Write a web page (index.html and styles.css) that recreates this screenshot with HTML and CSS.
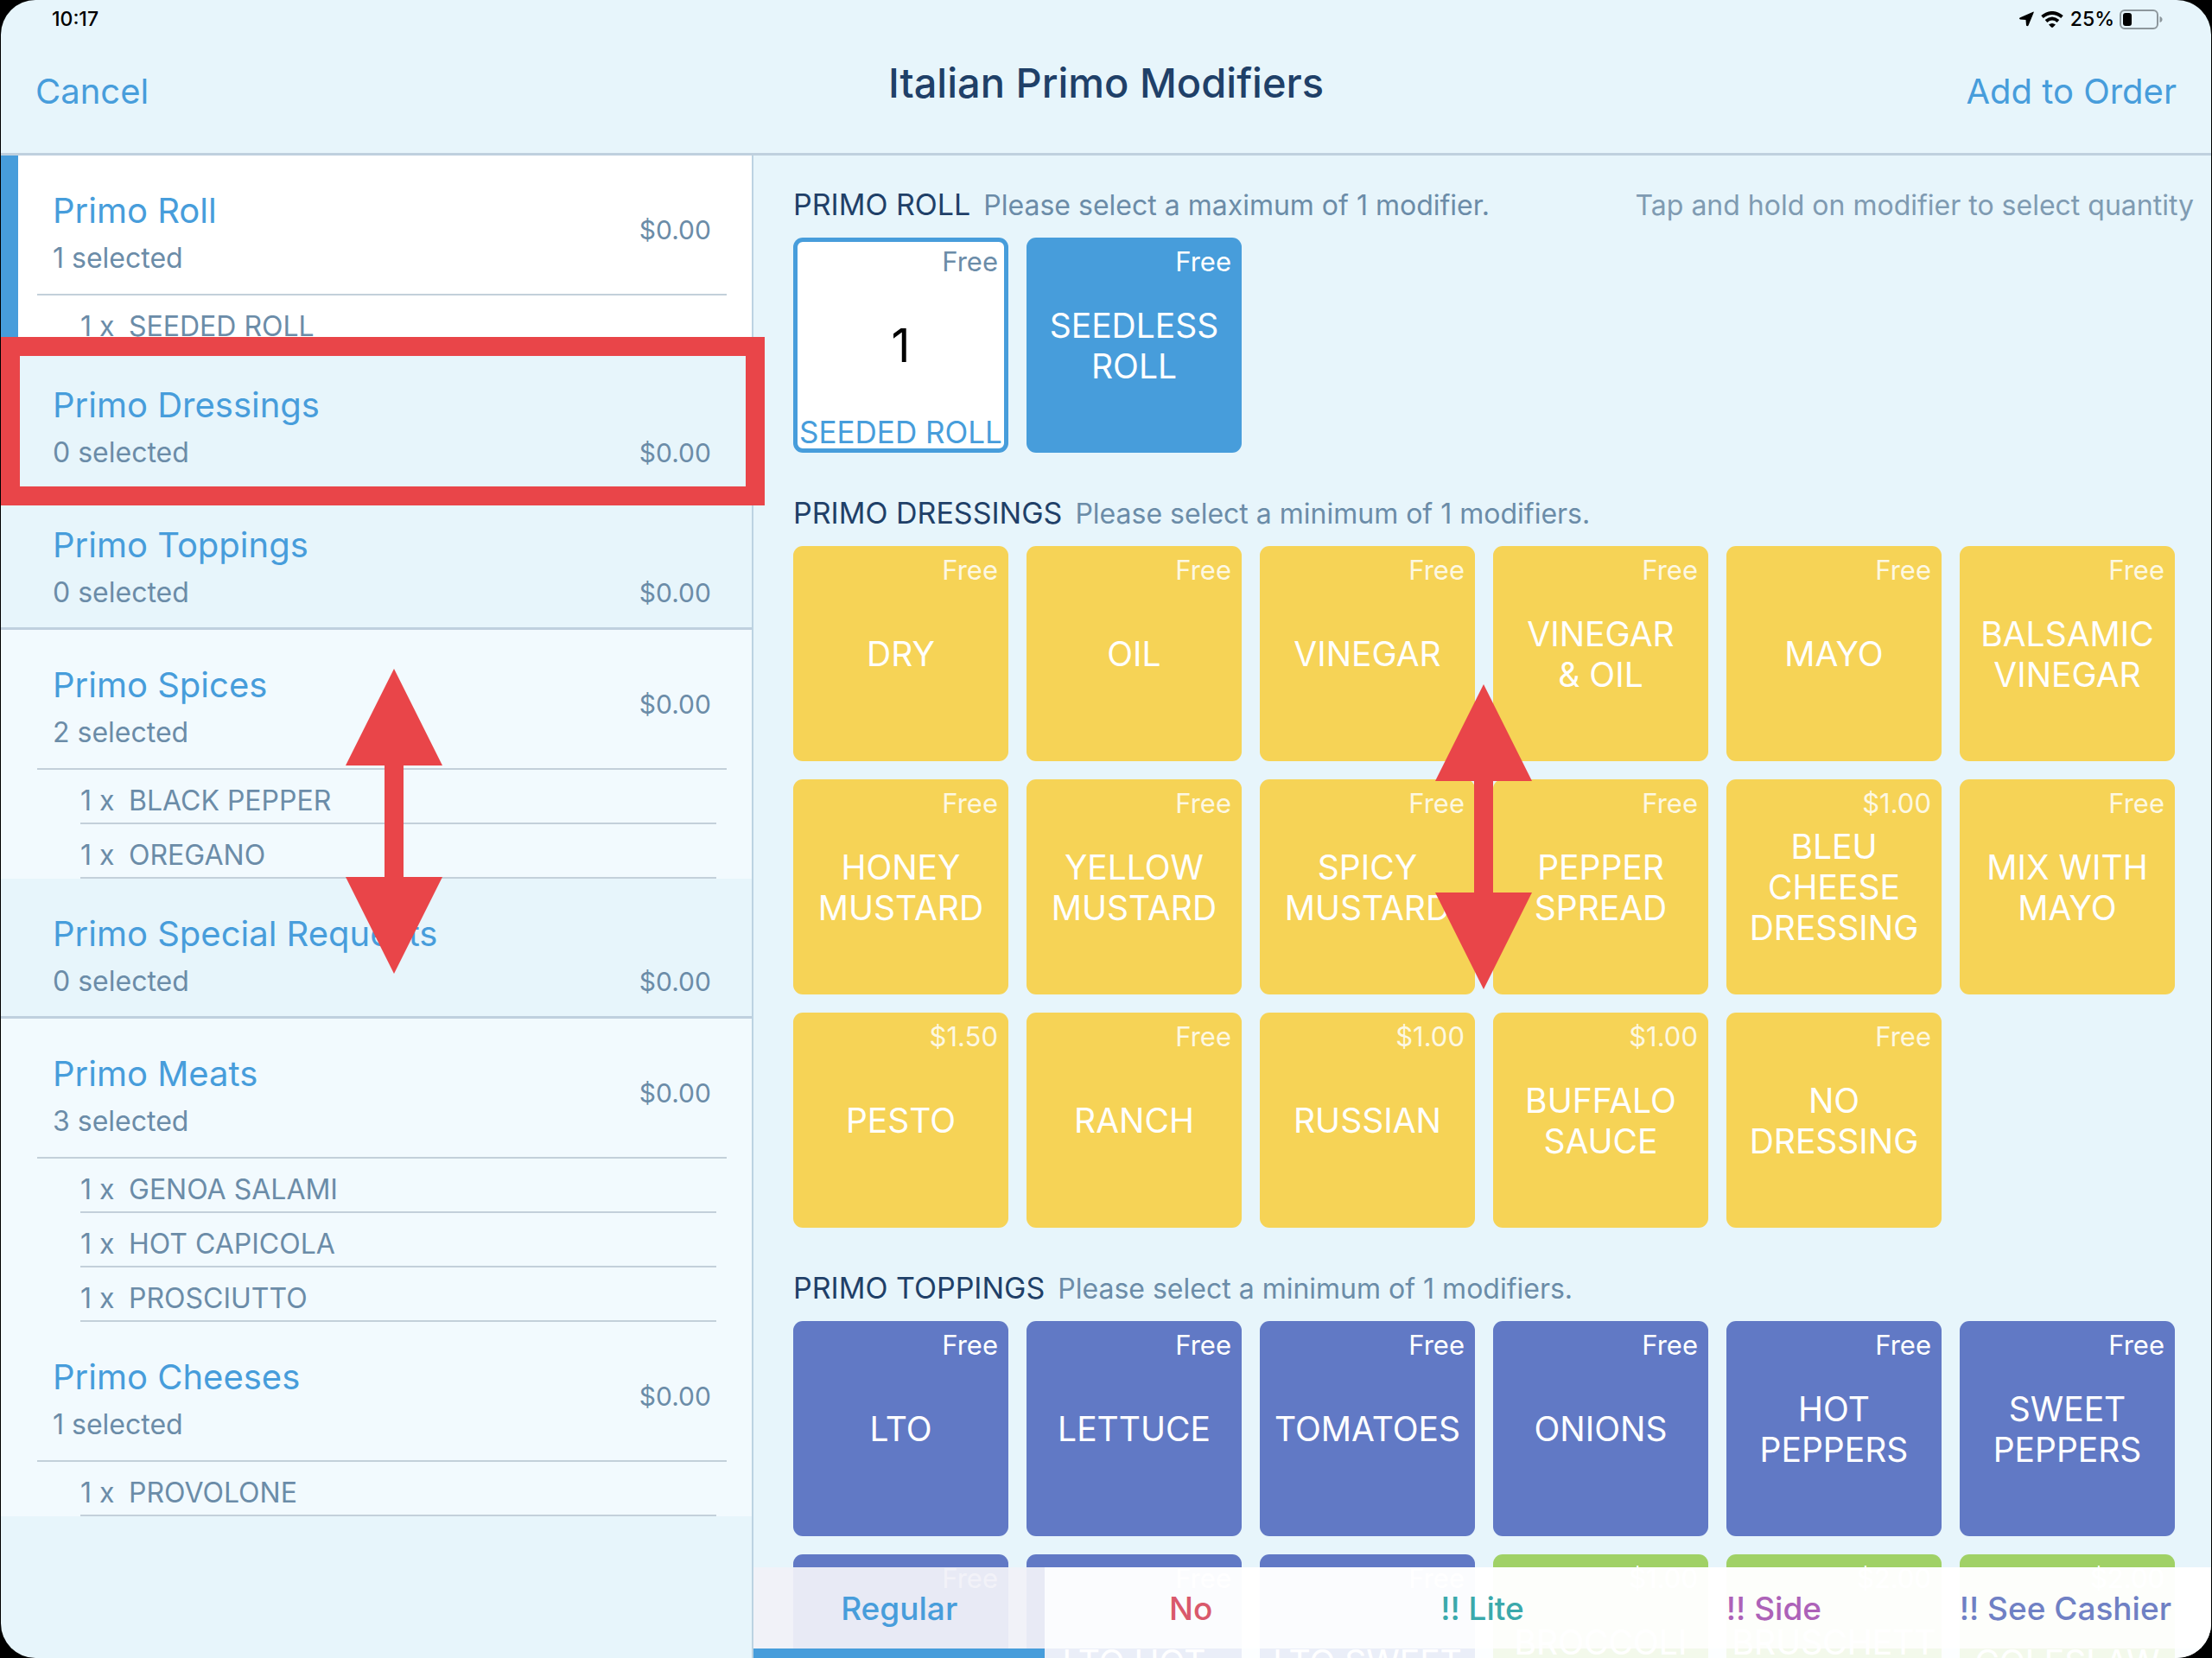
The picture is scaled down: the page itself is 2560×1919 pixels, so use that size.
FILE: index.html
```html
<!DOCTYPE html>
<html lang="en">
<head>
<meta charset="utf-8">
<meta name="viewport" content="width=device-width, initial-scale=1">
<title>Italian Primo Modifiers</title>
<link rel="stylesheet" href="styles.css">
</head>
<body>
<div class="device">
  <header class="top">
    <div class="status">
      <span>10:17</span>
      <span class="status-right">
        <svg class="locate" viewBox="0 0 18 18" aria-hidden="true"><path d="M17.500 0.500 Q18 0 17.500 2 L11.500 16.500 Q10.500 18 9 16.500 L8.500 10 L2 9.500 Q0 8.500 1.500 7.500 Z"/></svg>
        <svg class="wifi" viewBox="0 0 26 19" aria-hidden="true"><path d="M1.500 6.500 Q13 -2.500 24.500 6.500" /><path d="M6 11.500 Q13 5.500 20 11.500"/><path class="dot" d="M9 15.500 Q13 12.500 17 15.500 L14 18.500 Q13 19.300 12 18.500 Z"/></svg>
        <span>25%</span>
        <svg class="battery" viewBox="0 0 50 23" aria-hidden="true"><rect class="case" x="1" y="1" width="43" height="21" rx="5"/><rect x="4" y="4" width="10" height="15" rx="3"/><path class="cap" d="M46.500 8 Q49.500 9 49.500 11.500 Q49.500 14 46.500 15 Z"/></svg>
      </span>
    </div>
    <div class="navbar">
      <button class="nav-btn" type="button">Cancel</button>
      <h1>Italian Primo Modifiers</h1>
      <button class="nav-btn end" type="button">Add to Order</button>
    </div>
  </header>

  <div class="panes">
    <nav class="sidebar" aria-label="Modifier groups">
      <section class="group filled active">
        <button class="group-head" type="button"><span class="name">Primo Roll</span><span class="count">1 selected</span><span class="cost">$0.00</span></button>
        <ul><li><span class="qty">1 x</span>SEEDED ROLL</li></ul>
      </section>
      <section class="group">
        <button class="group-head" type="button"><span class="name">Primo Dressings</span><span class="count">0 selected</span><span class="cost">$0.00</span></button>
      </section>
      <section class="group ruled">
        <button class="group-head" type="button"><span class="name">Primo Toppings</span><span class="count">0 selected</span><span class="cost">$0.00</span></button>
      </section>
      <section class="group filled">
        <button class="group-head" type="button"><span class="name">Primo Spices</span><span class="count">2 selected</span><span class="cost">$0.00</span></button>
        <ul><li><span class="qty">1 x</span>BLACK PEPPER</li><li><span class="qty">1 x</span>OREGANO</li></ul>
      </section>
      <section class="group ruled">
        <button class="group-head" type="button"><span class="name">Primo Special Requests</span><span class="count">0 selected</span><span class="cost">$0.00</span></button>
      </section>
      <section class="group filled">
        <button class="group-head" type="button"><span class="name">Primo Meats</span><span class="count">3 selected</span><span class="cost">$0.00</span></button>
        <ul><li><span class="qty">1 x</span>GENOA SALAMI</li><li><span class="qty">1 x</span>HOT CAPICOLA</li><li><span class="qty">1 x</span>PROSCIUTTO</li></ul>
      </section>
      <section class="group filled">
        <button class="group-head" type="button"><span class="name">Primo Cheeses</span><span class="count">1 selected</span><span class="cost">$0.00</span></button>
        <ul><li><span class="qty">1 x</span>PROVOLONE</li></ul>
      </section>
    </nav>

    <main class="content">
      <div class="sections">
        <section>
          <div class="section-head"><h2>PRIMO ROLL</h2><p>Please select a maximum of 1 modifier.</p><p class="tip">Tap and hold on modifier to select quantity</p></div>
          <div class="tiles">
            <button class="tile chosen" type="button"><span class="price">Free</span><span class="label">1</span><span class="caption">SEEDED ROLL</span></button>
            <button class="tile blue" type="button"><span class="price">Free</span><span class="label">SEEDLESS ROLL</span></button>
          </div>
        </section>
        <section>
          <div class="section-head"><h2>PRIMO DRESSINGS</h2><p>Please select a minimum of 1 modifiers.</p></div>
          <div class="tiles">
            <button class="tile yellow" type="button"><span class="price">Free</span><span class="label">DRY</span></button>
            <button class="tile yellow" type="button"><span class="price">Free</span><span class="label">OIL</span></button>
            <button class="tile yellow" type="button"><span class="price">Free</span><span class="label">VINEGAR</span></button>
            <button class="tile yellow" type="button"><span class="price">Free</span><span class="label">VINEGAR<br>&amp; OIL</span></button>
            <button class="tile yellow" type="button"><span class="price">Free</span><span class="label">MAYO</span></button>
            <button class="tile yellow" type="button"><span class="price">Free</span><span class="label">BALSAMIC VINEGAR</span></button>
            <button class="tile yellow" type="button"><span class="price">Free</span><span class="label">HONEY MUSTARD</span></button>
            <button class="tile yellow" type="button"><span class="price">Free</span><span class="label">YELLOW MUSTARD</span></button>
            <button class="tile yellow" type="button"><span class="price">Free</span><span class="label">SPICY MUSTARD</span></button>
            <button class="tile yellow" type="button"><span class="price">Free</span><span class="label">PEPPER SPREAD</span></button>
            <button class="tile yellow" type="button"><span class="price">$1.00</span><span class="label">BLEU<br>CHEESE DRESSING</span></button>
            <button class="tile yellow" type="button"><span class="price">Free</span><span class="label">MIX WITH MAYO</span></button>
            <button class="tile yellow" type="button"><span class="price">$1.50</span><span class="label">PESTO</span></button>
            <button class="tile yellow" type="button"><span class="price">Free</span><span class="label">RANCH</span></button>
            <button class="tile yellow" type="button"><span class="price">$1.00</span><span class="label">RUSSIAN</span></button>
            <button class="tile yellow" type="button"><span class="price">$1.00</span><span class="label">BUFFALO SAUCE</span></button>
            <button class="tile yellow" type="button"><span class="price">Free</span><span class="label">NO<br>DRESSING</span></button>
          </div>
        </section>
        <section>
          <div class="section-head"><h2>PRIMO TOPPINGS</h2><p>Please select a minimum of 1 modifiers.</p></div>
          <div class="tiles">
            <button class="tile indigo" type="button"><span class="price">Free</span><span class="label">LTO</span></button>
            <button class="tile indigo" type="button"><span class="price">Free</span><span class="label">LETTUCE</span></button>
            <button class="tile indigo" type="button"><span class="price">Free</span><span class="label">TOMATOES</span></button>
            <button class="tile indigo" type="button"><span class="price">Free</span><span class="label">ONIONS</span></button>
            <button class="tile indigo" type="button"><span class="price">Free</span><span class="label">HOT<br>PEPPERS</span></button>
            <button class="tile indigo" type="button"><span class="price">Free</span><span class="label">SWEET PEPPERS</span></button>
            <button class="tile indigo" type="button"><span class="price">Free</span></button>
            <button class="tile indigo" type="button"><span class="price">Free</span><span class="label">LTO HOT</span></button>
            <button class="tile indigo" type="button"><span class="price">Free</span><span class="label">LTO SWEET</span></button>
            <button class="tile green" type="button"><span class="price">$1.00</span><span class="label">BROCCOLI RABE</span></button>
            <button class="tile green" type="button"><span class="price">$2.00</span><span class="label">BRUSCHETT<br>A</span></button>
            <button class="tile green" type="button"><span class="price">$2.00</span><span class="label">COLESLAW</span></button>
          </div>
        </section>
      </div>
      <div class="tabs">
        <button class="tab regular" type="button" aria-pressed="true">Regular</button>
        <button class="tab no" type="button">No</button>
        <button class="tab lite" type="button">!! Lite</button>
        <button class="tab side" type="button">!! Side</button>
        <button class="tab cashier" type="button">!! See Cashier</button>
      </div>
    </main>
  </div>

  <div class="highlight"></div>
  <svg class="arrow arrow-left" viewBox="0 0 112 353" aria-hidden="true"><path d="M56 0 L112 112 H67 V241 H112 L56 353 L0 241 H45 V112 H0 Z"/></svg>
  <svg class="arrow arrow-right" viewBox="0 0 112 353" aria-hidden="true"><path d="M56 0 L112 112 H67 V241 H112 L56 353 L0 241 H45 V112 H0 Z"/></svg>
</div>
</body>
</html>
```
FILE: styles.css
```css
:root {
  --sky: #e7f5fb;
  --pale: #f2fafe;
  --blue: #479ddb;
  --slate: #6b8ca8;
  --navy: #1f4068;
  --rule: #bfd0de;
  --red: #e94549;
}

* { box-sizing: border-box; }

body {
  margin: 0;
  background: #000;
  font-family: Inter, "Liberation Sans", sans-serif;
  color: var(--slate);
}

h1, h2, p, ul { margin: 0; padding: 0; font-weight: 400; }

button {
  border: 0;
  padding: 0;
  background: none;
  font: inherit;
  color: inherit;
  cursor: pointer;
}

.device {
  position: relative;
  display: flex;
  flex-direction: column;
  height: 100vh;
  margin: 0 1px;
  border-radius: 40px;
  overflow: hidden;
  background: var(--sky);
}

/* Status bar and title bar */
.top {
  flex: none;
  height: 180px;
  border-bottom: 3px solid var(--rule);
}

.status {
  display: flex;
  justify-content: space-between;
  height: 44px;
  padding: 0 56px 0 59px;
  font-size: 23px;
  font-weight: 500;
  line-height: 44px;
  color: #000;
}

.status-right { display: flex; align-items: center; gap: 6px; }
.locate { width: 18px; height: 18px; }
.wifi { width: 26px; height: 19px; margin: 0 2px; }
.wifi path { fill: none; stroke: #000; stroke-width: 4; }
.wifi .dot { fill: #000; stroke: none; }
.battery { width: 50px; height: 23px; }
.battery .case { fill: none; stroke: #8d979c; stroke-width: 2; }
.battery .cap { fill: #8d979c; }

.navbar {
  display: grid;
  grid-template-columns: 1fr auto 1fr;
  padding: 24px 40px 0;
}

.nav-btn {
  justify-self: start;
  margin-top: 12px;
  font-size: 40px;
  line-height: 52px;
  color: var(--blue);
}

.nav-btn.end { justify-self: end; }

h1 {
  font-size: 47px;
  font-weight: 500;
  line-height: 56px;
  color: var(--navy);
}

.panes { display: flex; flex: 1; min-height: 0; }

/* Group list */
.sidebar {
  flex: 0 0 34.05%;
  border-right: 2px solid #bcd3e2;
  overflow: hidden;
}

.group.ruled { border-bottom: 3px solid var(--rule); }
.group.filled { background: var(--pale); }
.group.active { background: #fff; box-shadow: inset 20px 0 var(--blue); }

.group-head {
  display: grid;
  grid-template-columns: 1fr auto;
  grid-template-rows: 54px 40px;
  row-gap: 8px;
  width: 100%;
  height: 162px;
  padding: 37px 47px 0 60px;
  align-content: start;
  text-align: left;
}

.ruled .group-head { height: 159px; }
.filled .group-head { height: 160px; }

.name { font-size: 40px; line-height: 54px; color: var(--blue); }
.count { grid-row: 2; font-size: 32px; line-height: 40px; }
.cost { grid-column: 2; grid-row: 2; font-size: 30px; line-height: 40px; }
.filled .cost { grid-row: 1 / 3; align-self: center; padding-bottom: 4px; }

.group ul {
  margin: 0 29px 0 42px;
  border-top: 2px solid #c3d0da;
  list-style: none;
}

.group li {
  display: flex;
  height: 63px;
  margin: 0 12px 0 50px;
  padding-top: 21px;
  border-bottom: 2px solid #c3d0da;
  font-size: 32px;
  line-height: 30px;
}

.qty { flex: 0 0 56px; }

/* Modifier tiles */
.content { position: relative; flex: 1; min-width: 0; overflow: hidden; }

.sections {
  display: flex;
  flex-direction: column;
  gap: 50px;
  padding: 37px 20px 0 46px;
}

.section-head {
  display: flex;
  align-items: baseline;
  gap: 15px;
  height: 58px;
  line-height: 40px;
  font-size: 32px;
}

h2 { font-size: 34px; color: var(--navy); }
.tip { margin-left: auto; color: #7f9bb2; }

.tiles {
  display: grid;
  grid-template-columns: repeat(6, 1fr);
  gap: 21px;
  padding-right: 22px;
}

.tile {
  position: relative;
  display: flex;
  align-items: center;
  justify-content: center;
  aspect-ratio: 1;
  min-width: 0;
  border-radius: 11px;
  color: #fff;
  font-size: 39px;
  line-height: 47px;
}

.tile.blue { background: var(--blue); }
.tile.yellow { background: #f6d356; }
.tile.indigo { background: #6179c5; }
.tile.green { background: #a0d166; }

.price {
  position: absolute;
  top: 8px;
  right: 12px;
  font-size: 31px;
  line-height: 40px;
}

.yellow .price { color: #fdf8e2; }

.tile.chosen { background: #fff; box-shadow: inset 0 0 0 5px var(--blue); }
.chosen .price { color: var(--slate); }
.chosen .label { font-size: 54px; color: #000; }

.caption {
  position: absolute;
  right: 0;
  bottom: 4px;
  left: 0;
  font-size: 35px;
  line-height: 40px;
  color: var(--blue);
}

/* Prefix tabs over the tile list */
.tabs {
  position: absolute;
  right: 0;
  bottom: 0;
  left: 0;
  display: grid;
  grid-template-columns: repeat(5, 1fr);
  height: 105px;
  background: rgba(255, 255, 255, .87);
}

.tab {
  height: 94px;
  background: rgba(255, 255, 255, .8);
  font-size: 37px;
  font-weight: 500;
}

.tab.regular {
  height: 105px;
  border-bottom: 11px solid var(--blue);
  background: rgba(230, 230, 242, .5);
  color: var(--blue);
}

.tab.no { color: #d9596b; }
.tab.lite { color: #3ba9ab; }
.tab.side { color: #ad62b8; }
.tab.cashier { color: #6f80c4; }

/* Call-outs */
.highlight {
  position: absolute;
  top: 390px;
  left: 0;
  width: 884px;
  height: 195px;
  border: 22px solid var(--red);
}

.arrow { position: absolute; width: 112px; height: 353px; fill: var(--red); }
.arrow-left { top: 774px; left: 399px; }
.arrow-right { top: 792px; left: 1660px; }
```
